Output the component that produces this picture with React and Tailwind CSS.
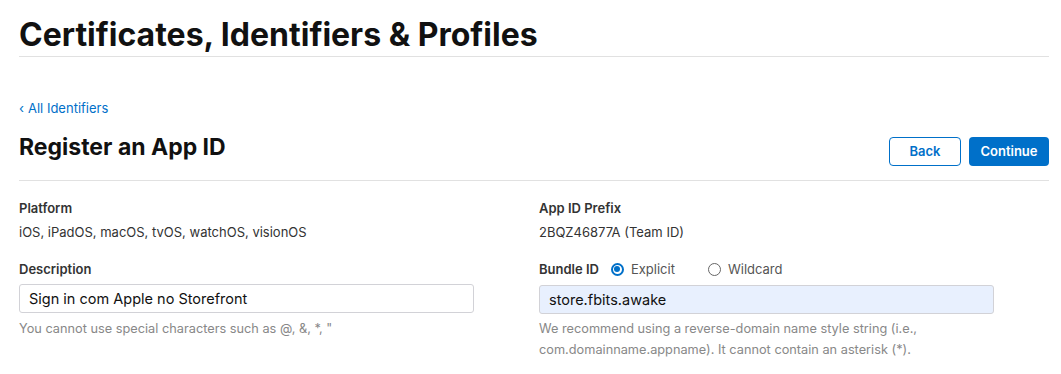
export default function App() {
  return (
    <div className="min-h-screen bg-white pl-[19px] pr-[12px] text-[#333]" style={{ fontFamily: 'Inter, "Noto Sans", sans-serif' }}>
      {/* Page header */}
      <div className="h-[57px] border-b border-[#e1e1e1] pt-[15px]">
        <h1 className="text-[32px] font-bold leading-[40px] text-[#111]">
          Certificates, Identifiers &amp; Profiles
        </h1>
      </div>

      <div className="pt-[42px]">
        <a className="block text-[13px] leading-[18px] text-[#0070c9]">
          <span className="mr-[4px]">‹</span>All Identifiers
        </a>

        <div className="mt-[15px] flex items-start justify-between border-b border-[#e1e1e1] pb-[14px]">
          <h2 className="text-[23px] font-bold leading-[30px] text-[#111]">Register an App ID</h2>
          <div className="mt-[5px] flex gap-[8px]">
            <button className="h-[29px] w-[72px] rounded-[4px] border border-[#0070c9] bg-white text-[13px] font-semibold text-[#0070c9]">
              Back
            </button>
            <button className="h-[29px] w-[80px] rounded-[4px] bg-[#0070c9] text-[13px] font-semibold text-white">
              Continue
            </button>
          </div>
        </div>

        <div className="grid grid-cols-[520px_1fr] pt-[18px]">
          {/* Left column */}
          <div>
            <Field label="Platform" value="iOS, iPadOS, macOS, tvOS, watchOS, visionOS" />
            <div className="mt-[19px]">
              <p className="text-[13px] font-semibold leading-[18px]">Description</p>
              <div className="mt-[6px] flex h-[29px] w-[455px] items-center rounded-[3px] border border-[#d2d2d7] bg-white px-[9px] text-[14.5px] text-[#111]">
                Sign in com Apple no Storefront
              </div>
              <p className="mt-[5px] text-[12.75px] leading-[21px] text-[#888]">
                You cannot use special characters such as @, &amp;, *, "
              </p>
            </div>
          </div>

          {/* Right column */}
          <div>
            <Field label="App ID Prefix" value="2BQZ46877A (Team ID)" />
            <div className="mt-[19px]">
              <div className="flex items-center text-[13px] leading-[18px]">
                <span className="font-semibold">Bundle ID</span>
                <span className="ml-[12px] flex items-center text-[#555]">
                  <span className="mr-[7px] flex h-[13px] w-[13px] items-center justify-center rounded-full border-2 border-[#0070c9] bg-white">
                    <span className="h-[6px] w-[6px] rounded-full bg-[#0070c9]" />
                  </span>
                  Explicit
                </span>
                <span className="ml-[33px] flex items-center text-[#555]">
                  <span className="mr-[7px] h-[13px] w-[13px] rounded-full border border-[#666] bg-white" />
                  Wildcard
                </span>
              </div>
              <div className="mt-[7px] flex h-[29px] w-[455px] items-center rounded-[3px] border border-[#d2d2d7] bg-[#e8f0fe] px-[9px] text-[14.5px] text-[#111]">
                store.fbits.awake
              </div>
              <p className="mt-[4px] w-[430px] text-[12.75px] leading-[21px] text-[#888]">
                We recommend using a reverse-domain name style string (i.e., com.domainname.appname). It cannot contain an asterisk (*).
              </p>
            </div>
          </div>
        </div>
      </div>
    </div>
  )
}

function Field({ label, value }) {
  return (
    <div>
      <p className="text-[13px] font-semibold leading-[18px]">{label}</p>
      <p className="mt-[6px] text-[13px] leading-[18px] text-[#333]">{value}</p>
    </div>
  )
}
